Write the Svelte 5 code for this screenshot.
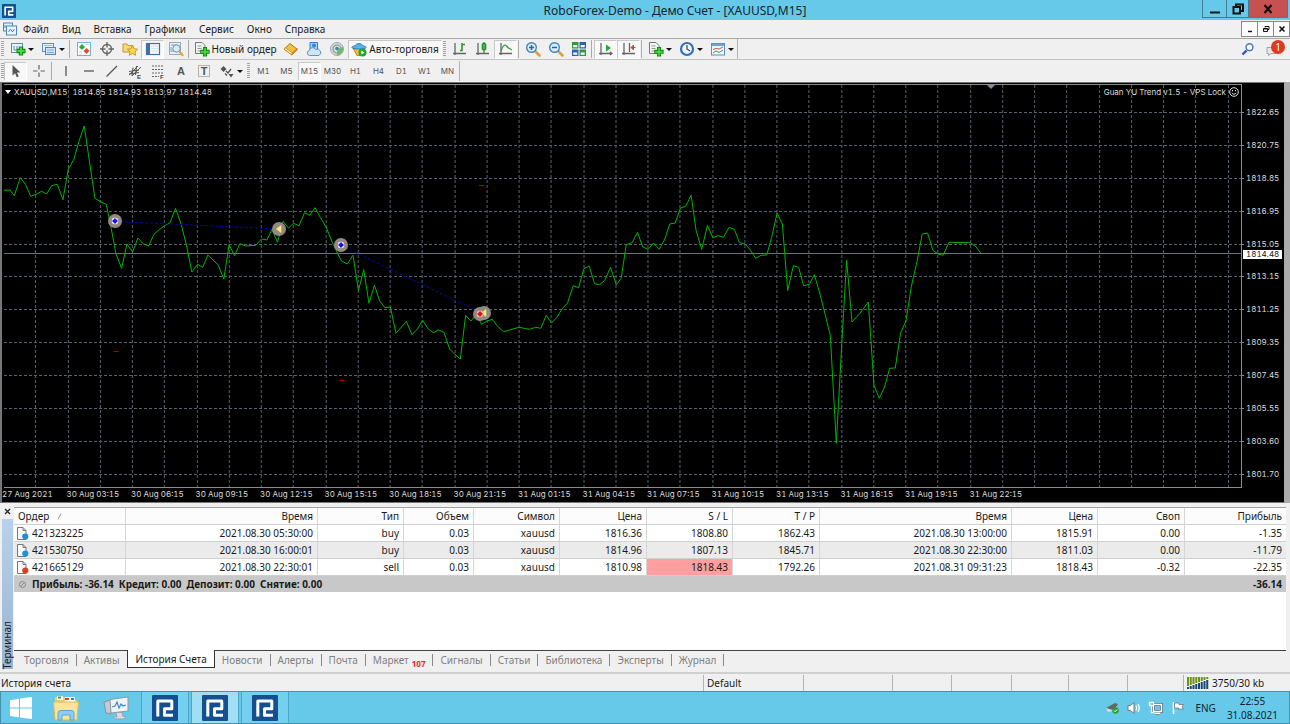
<script>
  const menus = ['Файл', 'Вид', 'Вставка', 'Графики', 'Сервис', 'Окно', 'Справка'];

  const standardBar = [
    { kind: 'drop', icon: 'newchart', label: 'Новый график' },
    { kind: 'drop', icon: 'profiles', label: 'Профили' },
    { kind: 'sep' },
    { kind: 'btn', icon: 'market', label: 'Обзор рынка' },
    { kind: 'btn', icon: 'target', label: 'Окно данных' },
    { kind: 'btn', icon: 'favorites', label: 'Навигатор' },
    { kind: 'btn', icon: 'panel', label: 'Терминал', pressed: true },
    { kind: 'btn', icon: 'tester', label: 'Тестер стратегий' },
    { kind: 'sep' },
    { kind: 'text', icon: 'neworder', label: 'Новый ордер', cls: 'order' },
    { kind: 'btn', icon: 'book', label: 'MetaEditor' },
    { kind: 'btn', icon: 'cloud', label: 'VPS' },
    { kind: 'btn', icon: 'radar', label: 'Сигналы' },
    { kind: 'text', icon: 'auto', label: 'Авто-торговля', cls: 'auto', pressed: true },
    { kind: 'grip' },
    { kind: 'btn', icon: 'bars', label: 'Бары' },
    { kind: 'btn', icon: 'candles', label: 'Свечи' },
    { kind: 'btn', icon: 'line', label: 'Линия', pressed: true },
    { kind: 'sep' },
    { kind: 'btn', icon: 'zoomin', label: 'Увеличить' },
    { kind: 'btn', icon: 'zoomout', label: 'Уменьшить' },
    { kind: 'btn', icon: 'tile', label: 'Мозаика' },
    { kind: 'sep' },
    { kind: 'btn', icon: 'scroll', label: 'Автопрокрутка', pressed: true },
    { kind: 'btn', icon: 'shift', label: 'Сдвиг графика', pressed: true },
    { kind: 'sep' },
    { kind: 'drop', icon: 'indicators', label: 'Индикаторы' },
    { kind: 'drop', icon: 'clock', label: 'Периоды' },
    { kind: 'drop', icon: 'template', label: 'Шаблоны' },
    { kind: 'end' }
  ];

  const drawBar = [
    { kind: 'btn', icon: 'cursor', label: 'Курсор', pressed: true },
    { kind: 'btn', icon: 'cross', label: 'Перекрестие' },
    { kind: 'sep' },
    { kind: 'btn', icon: 'vline', label: 'Вертикальная линия' },
    { kind: 'btn', icon: 'hline', label: 'Горизонтальная линия' },
    { kind: 'btn', icon: 'trend', label: 'Трендовая линия' },
    { kind: 'btn', icon: 'channel', label: 'Канал' },
    { kind: 'btn', icon: 'fibo', label: 'Линии Фибоначчи' },
    { kind: 'btn', icon: 'text', label: 'Текст' },
    { kind: 'btn', icon: 'label', label: 'Текстовая метка' },
    { kind: 'drop', icon: 'arrows', label: 'Стрелки' },
    { kind: 'grip' },
    ...['M1', 'M5', 'M15', 'M30', 'H1', 'H4', 'D1', 'W1', 'MN'].map((t) => ({
      kind: 'tf', label: t, pressed: t === 'M15'
    })),
    { kind: 'end' }
  ];

  // Plot area, in chart units
  const box = { x: 4, y: 85, w: 1238, h: 402 };
  const vlines = Array.from({ length: 38 }, (_, i) => Math.round(35.4 + i * 32.25) + 0.5);
  const prices = [
    ['1822.65', 112], ['1820.75', 145], ['1818.85', 178], ['1816.95', 211],
    ['1815.05', 244], ['1813.15', 276], ['1811.25', 309], ['1809.35', 342],
    ['1807.45', 375], ['1805.55', 408], ['1803.60', 441], ['1801.70', 474]
  ];
  const times = [
    '27 Aug 2021', '30 Aug 03:15', '30 Aug 06:15', '30 Aug 09:15', '30 Aug 12:15', '30 Aug 15:15',
    '30 Aug 18:15', '30 Aug 21:15', '31 Aug 01:15', '31 Aug 04:15', '31 Aug 07:15', '31 Aug 10:15',
    '31 Aug 13:15', '31 Aug 16:15', '31 Aug 19:15', '31 Aug 22:15'
  ];
  const px = (x) => ((x - box.x) / box.w) * 100;
  const py = (y) => ((y - box.y) / box.h) * 100;

  // Close prices, three units to a pixel, each session with its own origin
  const sessions = [
    { x: 0, y: 80, pts: '10,331 30,330 43,347 61,293 77,314 92,349 108,343 125,334 140,342 155,317 172,313 189,359 205,268 222,237 237,184 253,138 268,240 285,355 303,366 319,373 333,440 348,521 365,565 381,492 398,516 414,474 430,491 446,498 462,463 478,449 494,437 510,429 527,385 543,430 560,497 576,576 593,553 609,562 624,525 655,555 672,597 688,494 704,527 720,491 738,498 768,496 785,477 801,480 817,448 833,487 850,424 866,444 881,430 898,437 914,398 930,406 946,383 962,413 979,441 1000,492 1025,543 1043,552 1059,526' },
    { x: 300, y: 180, pts: '160,226 176,332 192,269 208,370 224,316 240,363 256,383 272,381 289,460 320,424 337,464 353,447 369,421 385,446 401,458 417,450 433,457 450,507 466,523 482,537 498,406 514,423 530,402 546,433 562,423 578,418 595,440 612,455 658,442 690,448 708,442 724,445 740,406 756,429 772,412 788,386 804,369 821,317 837,323 853,266 869,258 885,311 900,314 916,301 933,262 950,314 965,295 980,194 998,188 1014,157 1030,201 1046,208 1062,189 1079,208 1095,180 1111,132 1127,129 1143,84 1159,79 1175,46' },
    { x: 680, y: 180, pts: '35,46 50,152 67,208 84,136 100,173 116,167 132,172 149,142 165,148 180,188 197,192 213,210 229,235 245,226 262,225 277,172 293,99 309,132 325,332 342,257 358,262 373,317 390,313 405,284 421,339 437,402 453,467 471,790 487,500 502,241 518,426 542,400 567,366 584,616 600,655 616,621 631,565 648,564 664,459 680,423 696,320 713,245 729,162 745,159 761,211 776,222 792,226 809,187 874,188 890,200 905,220' }
  ];
  const line = sessions
    .flatMap((s) => s.pts.split(' ').map((p) => {
      const [x, y] = p.split(',').map(Number);
      return `${(s.x + x / 3).toFixed(1)},${(s.y + y / 3).toFixed(1)}`;
    }))
    .join(' ');

  const deals = [
    { x: 115, y: 221, type: 'entry' },
    { x: 279, y: 229, type: 'exit' },
    { x: 341, y: 245, type: 'entry' },
    { x: 484, y: 313, type: 'exit' },
    { x: 480, y: 314, type: 'sell' }
  ];
  const stops = [[116, 351], [342, 380], [482, 185]];

  const cols = [
    ['Ордер', 112], ['Время', 192], ['Тип', 86], ['Объем', 70], ['Символ', 86], ['Цена', 87],
    ['S / L', 86], ['T / P', 87], ['Время', 192], ['Цена', 86], ['Своп', 87], ['Прибыль', 101]
  ];
  const total = cols.reduce((a, c) => a + c[1], 0);
  const rows = [
    ['421323225', '2021.08.30 05:30:00', 'buy', '0.03', 'xauusd', '1816.36', '1808.80', '1862.43', '2021.08.30 13:00:00', '1815.91', '0.00', '-1.35'],
    ['421530750', '2021.08.30 16:00:01', 'buy', '0.03', 'xauusd', '1814.96', '1807.13', '1845.71', '2021.08.30 22:30:00', '1811.03', '0.00', '-11.79'],
    ['421665129', '2021.08.30 22:30:01', 'sell', '0.03', 'xauusd', '1810.98', '1818.43', '1792.26', '2021.08.31 09:31:23', '1818.43', '-0.32', '-22.35']
  ];
  const tabs = ['Торговля', 'Активы', 'История Счета', 'Новости', 'Алерты', 'Почта', 'Маркет', 'Сигналы', 'Статьи', 'Библиотека', 'Эксперты', 'Журнал'];
</script>

{#snippet logo(size)}
  <svg width={size} height={size} viewBox="0 0 26 26" aria-hidden="true">
    <rect width="26" height="26" rx="1" fill="#14508f" />
    <path d="M5.800 21.500V6H19.800V13.800H12.500V20.300H21" fill="none" stroke="#fff" stroke-width="3" stroke-linejoin="round" />
  </svg>
{/snippet}

{#snippet icon(name)}
  <svg class="ic" width="16" height="16" viewBox="0 0 16 16" fill="none" aria-hidden="true">
    {#if name === 'newchart'}
      <rect x="1.5" y="2.5" width="11" height="9" fill="#e8f2fb" stroke="#5b8fbd" />
      <path d="M4 5v4M4 9h4M7 5v3" stroke="#5b8fbd" />
      <path d="M11 5.5v9M6.5 10h9" stroke="#168a16" stroke-width="4.4" />
      <path d="M11 6.5v7M7.5 10h7" stroke="#3fdc3a" stroke-width="2" />
    {:else if name === 'profiles'}
      <rect x="1.5" y="2.5" width="11" height="8" fill="#e3effa" stroke="#5b8fbd" />
      <path d="M3 4.5h8" stroke="#9dc2e2" />
      <rect x="4.5" y="6.5" width="10" height="7" fill="#d2e5f6" stroke="#5487b6" />
      <path d="M6 9h7M6 11.5h7" stroke="#86aed2" />
    {:else if name === 'market'}
      <rect x="1.5" y="1.5" width="13" height="13" fill="#fff" stroke="#6fb3e0" />
      <path d="M6 3 9 6 6 9 3 6z" fill="#2fa83a" />
      <path d="M10.500 7 13.500 10 10.500 13 7.500 10z" fill="#e2492b" />
      <path d="M3 11h3M3 13h3M10 3.5h3" stroke="#c5d8e6" />
    {:else if name === 'target'}
      <circle cx="8" cy="8" r="4.5" stroke="#666" stroke-width="1.4" />
      <path d="M8 1v5.5M8 9.5V15M1 8h5.500M9.500 8H15" stroke="#666" stroke-width="1.4" />
    {:else if name === 'favorites'}
      <path d="M1 3h4l1 1.500h5V11H1z" fill="#f6d77a" stroke="#c79a2b" />
      <path d="m10.500 4.500 1.600 3.300 3.500.4-2.600 2.500.7 3.600-3.200-1.800-3.200 1.800.7-3.600-2.600-2.500 3.500-.4z" fill="#ffd84a" stroke="#b98a1c" stroke-width=".8" />
    {:else if name === 'panel'}
      <rect x="1.5" y="2.5" width="13" height="11" fill="#f3f8fd" stroke="#3f6fae" stroke-width="1.2" />
      <path d="M2 3h3v10H2z" fill="#3c6db2" />
      <path d="M6.500 5h7M6.500 7.500h7M6.500 10h7" stroke="#d4e2f1" />
    {:else if name === 'tester'}
      <rect x="1.5" y="1.5" width="11" height="12" fill="#e9eff5" stroke="#9aa9b8" />
      <path d="M3 11V6M5 11V8M3 4h7" stroke="#7fa0c2" />
      <circle cx="8.5" cy="7.5" r="3.7" fill="#d7ecfb" stroke="#7193b4" />
      <path d="m11.200 10.200 4 4.500" stroke="#e0a63b" stroke-width="2.2" />
    {:else if name === 'neworder' || name === 'indicators'}
      <path d="M1.500 1.500H8l3 3v8H1.500z" fill="#f4f4f4" stroke="#777" />
      <path d="M3.500 5h4M3.500 7.500h4M3.500 10h3" stroke="#999" />
      <path d="M11 6v9.500M6.200 10.800h9.500" stroke="#168a16" stroke-width="4" />
      <path d="M11 7v7.500M7.200 10.800h7.500" stroke="#3fdc3a" stroke-width="1.8" />
    {:else if name === 'book'}
      <path d="m1 8 6-5.500 7.500 6L9 14z" fill="#f2c044" stroke="#b27c13" />
      <path d="m1 8 8 6v-2.500L2 6.500z" fill="#fbe7a6" stroke="#b27c13" stroke-width=".6" />
      <path d="m9 14 5.500-5.500V6.800L9 11.600z" fill="#c98f1b" />
    {:else if name === 'cloud'}
      <path d="M4 1.500h7.500v7H4z" fill="#9fd3fa" stroke="#2e7fd0" />
      <circle cx="8" cy="4.5" r="2" fill="#2e86dc" />
      <path d="M3.500 14.500a2.500 2.500 0 0 1-.3-4.900A3.500 3.500 0 0 1 9.800 8.600 3 3 0 0 1 13 14.500z" fill="#cfe4f7" stroke="#5c93c9" />
    {:else if name === 'radar'}
      <circle cx="8" cy="8" r="6.5" fill="#d5dadd" stroke="#a1a8ad" />
      <circle cx="8" cy="8" r="4" stroke="#8c979e" stroke-width="1.2" />
      <path d="M8 8v6.500A6.500 6.500 0 0 0 14 6z" fill="#5cb85c" opacity=".8" />
      <circle cx="8" cy="7.5" r="1.8" fill="#4d7fb0" />
    {:else if name === 'auto'}
      <path d="M2 7h12l-5 7.500H6z" fill="#f1bd3a" stroke="#bd861a" />
      <path d="M1 6.500C1 5 3.500 5 4.500 4.500 5 2 11 2 11.500 4.500 12.500 5 15 5 15 6.500c0 2-14 2-14 0z" fill="#58b4e8" stroke="#2b7fb8" />
      <circle cx="11.5" cy="11.5" r="4" fill="#25a52f" />
      <path d="m10.300 9.400 3.200 2.100-3.200 2.100z" fill="#fff" />
    {:else if name === 'bars'}
      <path d="M3 2v12M1 12.500h13" stroke="#666" stroke-width="1.3" />
      <path d="M10 2v8M8 9.500h2M10 3.500h3" stroke="#1d9a2b" stroke-width="1.5" />
    {:else if name === 'candles'}
      <path d="M3 2v12M1 12.500h13" stroke="#666" stroke-width="1.3" />
      <path d="M9 1v11" stroke="#177a22" />
      <rect x="7.2" y="2.5" width="3.6" height="6.5" rx="1" fill="#30c040" stroke="#177a22" />
    {:else if name === 'line'}
      <path d="M3 2v12M1 12.500h13" stroke="#666" stroke-width="1.3" />
      <path d="M3 10C5 4 7 3 8.500 5S12 8 14 9" stroke="#3b9d45" stroke-width="1.3" />
    {:else if name === 'zoomin' || name === 'zoomout'}
      <path d="m9.500 9.500 5 5" stroke="#dba33c" stroke-width="2.6" stroke-linecap="round" />
      <circle cx="6.5" cy="6.5" r="4.8" fill="#d9eefc" stroke="#3f83c4" stroke-width="1.4" />
      <path d="M4 6.500h5" stroke="#2a62a8" stroke-width="1.5" />
      {#if name === 'zoomin'}<path d="M6.500 4v5" stroke="#2a62a8" stroke-width="1.5" />{/if}
    {:else if name === 'tile'}
      <path d="M1 1h6.500v6.500H1zM8.500 8.500H15V15H8.500z" fill="#2f9a3a" />
      <path d="M8.500 1H15v6.500H8.500zM1 8.500h6.500V15H1z" fill="#3061b8" />
      <path d="M2.200 4h4v2.200h-4zM9.700 4h4v2.200h-4zM2.200 11.500h4v2.200h-4zM9.700 11.500h4v2.200h-4z" fill="#fff" />
    {:else if name === 'scroll'}
      <path d="M3 2v12M1 12.500h13M12 11l2 1.500-2 1.500" stroke="#666" stroke-width="1.3" />
      <path d="m8 3.500 5 3.500L8 10.500z" fill="#27a836" />
    {:else if name === 'shift'}
      <path d="M3 2v12M1 12.500h13M8.500 2v9" stroke="#666" stroke-width="1.3" />
      <path d="M14.500 6.500h-4M12.500 4 10 6.500 12.500 9z" stroke="#cf4a22" fill="#cf4a22" />
    {:else if name === 'clock'}
      <circle cx="8" cy="8" r="6" fill="#eef6fd" stroke="#2f6fc0" stroke-width="2.2" />
      <path d="M8 4v4l3 2" stroke="#444" stroke-width="1.2" />
    {:else if name === 'template'}
      <rect x="1.5" y="2.5" width="13" height="11.5" fill="#edf5fc" stroke="#5c8fbf" />
      <path d="M2 4h12" stroke="#6fa5d6" stroke-width="2" />
      <path d="m3 8.500 3-1 3 .5 4-2" stroke="#c45e3d" />
      <path d="m3 12 3-2 3 1.500 4-2.500" stroke="#4f9a4b" />
    {:else if name === 'cursor'}
      <path d="M4.500 2v10.500l2.600-2.300 1.700 4 1.900-.8-1.700-3.900H12.500z" fill="#555" />
    {:else if name === 'cross'}
      <path d="M8 2v4.500M8 9.500V14M2 8h4.500M9.500 8H14" stroke="#666" stroke-width="1.2" />
    {:else if name === 'vline'}
      <path d="M8 3v10" stroke="#555" stroke-width="1.3" />
    {:else if name === 'hline'}
      <path d="M3 8h10" stroke="#555" stroke-width="1.3" />
    {:else if name === 'trend'}
      <path d="M2.500 13.500 13 3" stroke="#555" stroke-width="1.3" />
    {:else if name === 'channel'}
      <path d="m2 12 9-9M5 13l9-9M2 8.500 12 7M2 11l10-1.500M6 4.500 5 13M9.500 3 8.500 12" stroke="#555" />
      <text x="10" y="15.500" class="tiny">E</text>
    {:else if name === 'fibo'}
      <path d="M2 3h12M2 6.500h12M2 10h12M2 13.500h7" stroke="#666" stroke-dasharray="2 1" />
      <text x="10" y="15.500" class="tiny">F</text>
    {:else if name === 'text'}
      <text x="8" y="12" class="glyph">A</text>
    {:else if name === 'label'}
      <rect x="2.5" y="2.5" width="11" height="11" stroke="#777" stroke-dasharray="1 1" />
      <text x="8" y="12" class="glyph">T</text>
    {:else if name === 'arrows'}
      <path d="m4.500 3 3 3-3 3-3-3zM9.500 11h5L12 14.500z" fill="#555" />
      <path d="m7 8 2 2 3-4M6 10.500 8 12.500" stroke="#555" stroke-width="1.3" />
    {/if}
  </svg>
{/snippet}

{#snippet bar(items)}
  {#each items as it}
    {#if it.kind === 'sep'}
      <span class="sep"></span>
    {:else if it.kind === 'grip'}
      <span class="grip"></span>
    {:else if it.kind === 'end'}
      <span class="end"></span>
    {:else if it.kind === 'tf'}
      <button class="tb tf" class:pressed={it.pressed}>{it.label}</button>
    {:else if it.kind === 'text'}
      <button class="tb wide {it.cls}" class:pressed={it.pressed}>{@render icon(it.icon)}<span>{it.label}</span></button>
    {:else if it.kind === 'drop'}
      <button class="tb drop" aria-label={it.label}>{@render icon(it.icon)}<i class="caret"></i></button>
    {:else}
      <button class="tb" class:pressed={it.pressed} aria-label={it.label}>{@render icon(it.icon)}</button>
    {/if}
  {/each}
{/snippet}

<div class="app">
  <header class="title">
    <span class="applogo">{@render logo(14)}</span>
    <h1>RoboForex-Demo - Демо Счет - [XAUUSD,M15]</h1>
    <div class="winbtns">
      <button aria-label="Свернуть"><svg width="12" height="12" viewBox="0 0 12 12"><path d="M1 9.500h10" stroke="#111" stroke-width="2" /></svg></button>
      <button class="max" aria-label="Развернуть"><svg width="12" height="12" viewBox="0 0 12 12" fill="none" stroke="#111" stroke-width="2"><path d="M4 3V1.500h7V8H9" /><path d="M1.500 4H8v6.500H1.500z" /></svg></button>
      <button class="close" aria-label="Закрыть"><svg width="10" height="10" viewBox="0 0 10 10"><path d="m1.500 1 7 8M8.500 1l-7 8" stroke="#111" stroke-width="2.2" /></svg></button>
    </div>
  </header>

  <nav class="menu">
    <svg class="doc" width="16" height="14" viewBox="0 0 16 14" fill="none" aria-hidden="true">
      <rect x="1.5" y="1" width="9" height="8" fill="#dcecf9" stroke="#4c86bd" />
      <rect x="4.5" y="4" width="10" height="9" fill="#eaf4fc" stroke="#4c86bd" />
      <path d="M3 3v3M6.500 10l2-3 2 3 2-3" stroke="#4c86bd" />
    </svg>
    {#each menus as m}<button>{m}</button>{/each}
    <div class="mdi">
      <button aria-label="Свернуть окно"><svg width="8" height="8" viewBox="0 0 8 8"><path d="M2 6.500h4" stroke="#111" stroke-width="1.4" /></svg></button>
      <button aria-label="Восстановить окно"><svg width="8" height="8" viewBox="0 0 8 8" fill="none" stroke="#111"><path d="M3 2.500V1.500h4V4.500H6M1.500 3.500h4v3h-4zM1.500 4h4" /></svg></button>
      <button aria-label="Закрыть окно"><svg width="8" height="8" viewBox="0 0 8 8"><path d="m1.500 1.500 5 5M6.500 1.500l-5 5" stroke="#111" stroke-width="1.6" /></svg></button>
    </div>
  </nav>

  <div class="tools">
    <div class="toolbar first"><span class="grip"></span>{@render bar(standardBar)}
      <div class="right">
        <button aria-label="Поиск"><svg width="14" height="14" viewBox="0 0 14 14" fill="none"><path d="m1.500 12.500 4-4" stroke="#2c55b5" stroke-width="2.4" /><circle cx="8.5" cy="5.2" r="3.4" fill="#fff" stroke="#4e74c4" stroke-width="1.5" /></svg></button>
        <button class="chat" aria-label="Сообщения">
          <svg width="14" height="14" viewBox="0 0 14 14"><path d="M2 5.500h9v6H6L3.500 13.500V11.500H2z" fill="#e8e8ea" stroke="#a4a4aa" /></svg>
          <span class="badge">1</span>
        </button>
      </div>
    </div>
    <div class="toolbar second"><span class="grip thin"></span>{@render bar(drawBar)}</div>
  </div>

  <main class="chart">
    <div class="plot">
      <svg class="lines" viewBox="{box.x} {box.y} {box.w} {box.h}" preserveAspectRatio="none" fill="none">
        <g class="grid">
          {#each vlines as x}<path d="M{x} 85V487" />{/each}
          {#each prices as p}<path d="M4 {p[1] + 0.5}H1242" />{/each}
        </g>
        <path class="bid" d="M4 253.500H1242" />
        <polyline class="close-line" points={line} />
        <path class="deal-line" d="M115 221.500 279 229M341 245.500 482 313" />
        {#each stops as s}<path class="stop" d="M{s[0] - 2.5} {s[1] + 0.5}h5" />{/each}
      </svg>
      {#each deals as d}
        <i class="halo" style="left:{px(d.x)}%;top:{py(d.y)}%"></i>
      {/each}
      {#each deals as d}
        <svg class="deal" style="left:{px(d.x)}%;top:{py(d.y)}%" width="14" height="14" viewBox="0 0 14 14">
          {#if d.type === 'exit'}
            <path d="M9 3.500v7L4.500 7z" fill="#fff04a" stroke="#e8e4dc" stroke-width=".6" />
          {:else}
            <circle cx="7" cy="7" r="3.2" fill={d.type === 'sell' ? '#e8d8c8' : '#fff'} />
            <path d="M7 4 10 7 7 10 4 7z" fill={d.type === 'sell' ? '#f01010' : '#1414f0'} />
          {/if}
        </svg>
      {/each}
      <div class="quote"><i></i><span>XAUUSD,M15</span><span>1814.85 1814.93 1813.97 1814.48</span></div>
      <div class="expert">Guan YU Trend v1.5 - VPS Lock
        <svg width="10" height="10" viewBox="0 0 10 10" fill="none" stroke="#ddd" aria-hidden="true"><circle cx="5" cy="5" r="4.3" /><path d="M2.800 5.800c.8 1.900 3.600 1.900 4.400 0M3.500 3v1.300M6.500 3v1.300" /></svg>
      </div>
      <i class="shiftmark" style="left:{px(992)}%"></i>
    </div>
    <div class="yaxis">
      {#each prices as p}<span style="top:{py(p[1])}%">{p[0]}</span>{/each}
      <span class="now" style="top:{py(253.5)}%">1814.48</span>
    </div>
    <div class="xaxis">
      {#each times as t, i}<span style="left:{px(4 + i * 64.5)}%">{t}</span>{/each}
    </div>
  </main>

  <section class="terminal">
    <div class="side">
      <button aria-label="Закрыть терминал"><svg width="7" height="7" viewBox="0 0 7 7"><path d="m1 1 5 5M6 1 1 6" stroke="#222" stroke-width="1.3" /></svg></button>
      <div class="strip"><span>Терминал</span></div>
    </div>
    <div class="body">
      <div class="list">
        <table>
          <colgroup>{#each cols as c}<col style="width:{(c[1] / total) * 100}%" />{/each}</colgroup>
          <thead><tr>{#each cols as c, i}<th>{c[0]}{#if i === 0}<svg width="6" height="7" viewBox="0 0 6 7"><path d="M1 6.500 4 .5" stroke="#999" /></svg>{/if}</th>{/each}</tr></thead>
          <tbody>
            {#each rows as r}
              <tr>
                {#each r as c, i}
                  <td class:hit={c === '1818.43' && i === 6}>
                    {#if i === 0}
                      <svg width="13" height="13" viewBox="0 0 13 13"><path d="M1.500.5H7l3 3v9H1.500z" fill="#fafafa" stroke="#777" /><path d="M7 .5v3h3" fill="none" stroke="#777" /><circle cx="9.3" cy="9.5" r="3.1" fill={r[2] === 'sell' ? '#d9401c' : '#1e8fd8'} /></svg>
                    {/if}{c}
                  </td>
                {/each}
              </tr>
            {/each}
          </tbody>
          <tfoot>
            <tr>
              <td colspan="11"><svg width="13" height="9" viewBox="0 0 13 9"><circle cx="6.5" cy="4.5" r="3" fill="none" stroke="#888" /><path d="m4.500 6.500 4-4" stroke="#888" /></svg><b>Прибыль: -36.14</b><b>Кредит: 0.00</b><b>Депозит: 0.00</b><b>Снятие: 0.00</b></td>
              <td><b>-36.14</b></td>
            </tr>
          </tfoot>
        </table>
      </div>
      <div class="tabs" role="tablist">
        {#each tabs as t, i}
          <button role="tab" aria-selected={i === 2} class:active={i === 2} class:nosep={i === 1}>{t}{#if t === 'Маркет'}<sub>107</sub>{/if}</button>
        {/each}
      </div>
    </div>
  </section>

  <footer class="status">
    <span>История счета</span><span>Default</span><span></span><span></span><span></span><span></span><span></span><span></span>
    <span class="net">
      <svg width="22" height="12" viewBox="0 0 22 12" aria-hidden="true">
        {#each [0, 1, 2, 3, 4, 5, 6, 7] as i}
          <rect x={i * 2.75} y="0" width="2" height={9 - i} fill="#6f8f1c" />
          <rect x={i * 2.75} y={10 - i} width="2" height={2 + i} fill="#164a72" />
        {/each}
      </svg>3750/30 kb</span>
  </footer>

  <div class="taskbar">
    <button class="pin" aria-label="Пуск"><svg width="24" height="24" viewBox="0 0 24 24" fill="#fff"><path d="M1 4.200 10 2.800V11.500H1zM11 2.600 23 1V11.500H11zM1 12.500h9v8.700L1 19.900zM11 12.500h12V23L11 21.400z" /></svg></button>
    <button class="pin" aria-label="Проводник"><svg width="28" height="26" viewBox="0 0 28 26"><path d="M3 2h9l2 3h11v19H3z" fill="#f0cf6a" /><path d="M5 1h6v4H5zM13 2h10v5H13z" fill="#fff" /><path d="M6 1.500h3v2H6z" fill="#3aa14a" /><path d="M13 3h4v2h-4z" fill="#d5412d" /><path d="M19 3h3v2h-3z" fill="#2f7fd0" /><path d="M1.500 7h25L25 25H3z" fill="#f9e59a" stroke="#dcb94f" /><path d="M6 25v-7q0-2.500 3-2.500h10q3 0 3 2.500v7h-4v-5h-8v5z" fill="#8fcdf0" stroke="#5aa6d8" /></svg></button>
    <button class="pin" aria-label="Диспетчер задач"><svg width="26" height="24" viewBox="0 0 26 24"><path d="M1 6 8 4v14l-5-1z" fill="#c5ccd1" stroke="#87929a" /><path d="M7 3.500 25 1v14L8 17z" fill="#eef3f6" stroke="#8e9aa2" /><path d="m9 11 3-1 2-4 2 6 2-4 2 2 3-1" fill="none" stroke="#3b8cc9" stroke-width="1.2" /><path d="M13 16.500h6l1 4h3l-2 2.500h-9l-2-2h4z" fill="#d6dce0" stroke="#98a3aa" /></svg></button>
    {#each [0, 1, 2] as i}<button class="task" class:current={i === 1} aria-label="Терминал {i + 1}">{@render logo(26)}</button>{/each}
    <div class="tray">
      <svg width="16" height="16" viewBox="0 0 16 16"><path d="M2 8 11 3l3 1-4 6z" fill="#666" /><path d="m2 8 7 3-5 1z" fill="#ddd" /><circle cx="11.5" cy="10.5" r="3.2" fill="#2f9e2f" /><path d="m10 10.500 1.200 1.200 2-2.200" fill="none" stroke="#fff" /></svg>
      <svg width="16" height="16" viewBox="0 0 16 16" fill="none"><path d="M2 5.500h2.500L8 2.500v11L4.500 10.500H2z" fill="#fff" stroke="#777" /><path d="M10 5.500q1.500 2.500 0 5M12 4q2.500 4 0 8" stroke="#fff" stroke-width="1.2" /></svg>
      <svg width="16" height="16" viewBox="0 0 16 16" fill="none"><path d="M5.500 4.500h8v7h-8zM7 13.500h5" stroke="#5c6b73" stroke-width="2.8" /><path d="M5.500 4.500h8v7h-8zM7 13.500h5" stroke="#fff" stroke-width="1.3" /><path d="M1.500 2.500h4v3h-4zM3.500 5.500v7h3" stroke="#fff" stroke-width="1.3" /></svg>
      <svg width="16" height="16" viewBox="0 0 16 16"><path d="M3.500 2v12" stroke="#fff" stroke-width="1.6" /><path d="M4.500 3H9v1.500h4.500L12 7l1.500 2H8.500V8h-4z" fill="#fff" stroke="#666" stroke-width=".7" /></svg>
      <span class="lang">ENG</span>
      <div class="clock"><span>22:55</span><span>31.08.2021</span></div>
    </div>
  </div>
</div>

<style>
  :global(body) { margin: 0; }
  .app { min-height: 100vh; display: flex; flex-direction: column; background: #f0f0f0; color: #1a1a1a; font: 10px/16px "Noto Sans", "Open Sans", sans-serif; }
  button { all: unset; box-sizing: border-box; display: flex; align-items: center; justify-content: center; white-space: nowrap; cursor: default; }
  svg { display: block; flex: none; }
  .tiny { font: 700 6px "Liberation Sans", sans-serif; fill: #444; }
  .glyph { font: 700 11px "Liberation Sans", sans-serif; fill: #555; text-anchor: middle; }

  .title { display: grid; grid-template-columns: 88px 1fr 88px; height: 20px; background: #66c9ea; padding-left: 2px; }
  .applogo { align-self: center; }
  h1 { margin: 0; font-size: 12px; line-height: 21px; font-weight: 400; text-align: center; padding-left: 58px; color: #13242c; }
  .winbtns { display: flex; height: 18px; margin-right: 2px; border: 1px solid #3f7f96; border-top: 0; box-sizing: border-box; }
  .winbtns button { flex: 24; border-right: 1px solid #3f7f96; }
  .winbtns .max { flex: 21; }
  .winbtns .close { flex: 39; background: #c75050; border: 0; }

  .menu { display: flex; align-items: center; gap: 13px; height: 18px; padding-left: 2px; border-bottom: 1px solid #a8a8a8; }
  .doc { margin-right: -8px; }
  .mdi { display: flex; margin-left: auto; border: 1px solid #888; height: 16px; box-sizing: border-box; background: #fbfbfb; }
  .mdi button { width: 16px; border-right: 1px solid #888; }
  .mdi button:last-child { border: 0; width: 15px; }

  .toolbar { display: flex; align-items: center; height: 20px; padding: 0 5px 0 0; }
  .toolbar.second { height: 22px; border-top: 1px solid #c4c4c4; }
  .tb { width: 23px; height: 19px; flex: none; }
  .tb.drop { width: 31px; gap: 2px; }
  .tb.wide { gap: 2px; }
  .order { width: 88px; }
  .auto { width: 94px; }
  .pressed { background: #f8f8f8; border: 1px solid #c8c8c8; border-right-color: #fff; border-bottom-color: #fff; }
  .caret { border: 3px solid transparent; border-top: 3px solid #111; border-bottom: 0; }
  .tf { font: 8px/12px Inter, "DejaVu Sans", sans-serif; font-variant-numeric: tabular-nums; color: #555; }
  .sep { width: 2px; height: 18px; margin-right: 2px; border-right: 1px solid #aaa; box-sizing: border-box; flex: none; }
  .end { width: 1px; height: 20px; background: #b4b4b4; }
  .grip { width: 3px; height: 16px; margin-right: 2px; margin-left: 1px; flex: none; background: repeating-linear-gradient(#a4a4a4 0 1px, transparent 1px 2px); }
  .grip.thin { margin-right: 0; }
  .right { display: flex; gap: 10px; margin-left: auto; }
  .chat { position: relative; width: 20px; justify-content: start; }
  .badge { position: absolute; right: 0; top: -2px; width: 14px; height: 14px; border-radius: 50%; background: #e03a1e; color: #fff; font-size: 10px; line-height: 14px; text-align: center; }

  .chart { flex: 1 0 420px; display: grid; grid-template-columns: 1fr 42px; grid-template-rows: 1fr 14px; box-sizing: border-box; background: #000; border: 1px solid #777; border-left-width: 2px; border-right-color: #aaa; margin-right: 5px; padding: 1px 0 0 2px; box-shadow: 5px 0 #ababab; color: #dcdcdc; font: 8px/12px Inter, "DejaVu Sans", sans-serif; font-variant-numeric: tabular-nums; }
  .plot { position: relative; border: 1px solid #8c8c8c; border-left: 0; }
  .lines { position: absolute; inset: 0; width: 100%; height: 100%; }
  .lines :is(path, polyline) { vector-effect: non-scaling-stroke; }
  .grid { stroke: #56636f; stroke-dasharray: 3 2; }
  .bid { stroke: #66737f; }
  .close-line { stroke: #00b400; }
  .deal-line { stroke: #0000b8; stroke-dasharray: 3 2; }
  .stop { stroke: #b00000; }
  .deal, .halo { position: absolute; margin: -7px 0 0 -7px; }
  .halo { width: 14px; height: 14px; border-radius: 50%; background: #948880; }
  .quote { position: absolute; left: 1px; top: 1px; display: flex; gap: 5px; align-items: center; }
  .quote i { border: 3px solid transparent; border-top: 4px solid #fff; border-bottom: 0; margin-right: -2px; }
  .expert { position: absolute; right: 2px; top: 1px; display: flex; align-items: center; gap: 3px; }
  .shiftmark { position: absolute; top: 0; margin-left: -4px; border: 4px solid transparent; border-top: 4px solid #7c8fa3; border-bottom: 0; }
  .yaxis { position: relative; margin: 1px 0; }
  .yaxis span { position: absolute; left: 4px; margin-top: -6px; }
  .yaxis span::before { content: ""; position: absolute; left: -4px; top: 6px; width: 2px; height: 1px; background: #8c8c8c; }
  .yaxis .now { left: 1px; margin-top: -4px; padding: 0 3px; line-height: 9px; background: #fff; color: #111; }
  .yaxis .now::before { display: none; }
  .xaxis { position: relative; }
  .xaxis span { position: absolute; top: 0; margin-left: -2px; white-space: nowrap; }

  .terminal { display: grid; grid-template-columns: 14px 1fr; height: 168px; margin-top: 1px; margin-right: 4px; }
  .side { display: flex; flex-direction: column; padding: 0 1px 3px 2px; }
  .side button { height: 15px; }
  .strip { flex: 1; display: flex; align-items: flex-end; justify-content: center; background: linear-gradient(#b9d1ea, #98b4d2); }
  .strip span { writing-mode: vertical-rl; transform: rotate(180deg); line-height: 11px; }
  .body { display: flex; flex-direction: column; min-width: 0; padding-top: 3px; }
  .list { flex: 1; background: #fff; border-top: 1px solid #a0a0a0; border-bottom: 1px solid #444; }
  table { width: 100%; border-collapse: separate; border-spacing: 0; table-layout: fixed; line-height: 15px; }
  th, td { box-sizing: border-box; padding: 0 4px; height: 17px; text-align: right; font-weight: 400; white-space: nowrap; border-right: 1px solid #d6d6d6; border-bottom: 1px solid #d0d0d0; }
  th { background: #fcfcfc; }
  th:first-child, td:first-child { text-align: left; }
  th:first-child svg { display: inline-block; margin-left: 8px; }
  td svg { display: inline-block; vertical-align: middle; margin: 0 3px 0 -2px; }
  th:last-child, td:last-child { border-right: 0; }
  tbody tr:nth-child(2) { background: #ebebeb; }
  .hit { background: #ff9f9f; }
  tfoot td { background: #c8c8c8; border: 0; height: 16px; }
  b + b { margin-left: 5px; }
  .tabs { display: flex; padding-left: 3px; height: 21px; }
  .tabs button { padding: 0 8px 0 7px; height: 17px; color: #808080; position: relative; }
  .tabs button:not(.active, .nosep)::after { content: ""; position: absolute; right: 0; top: 3px; height: 12px; width: 1px; background: #888; }
  .tabs .active { background: #fff; color: #1a1a1a; border: 1px solid #333; border-top: 0; margin-top: -1px; height: 18px; padding: 0 7px; }
  sub { font-size: 8px; line-height: 8px; font-weight: 700; color: #e8242c; align-self: flex-end; margin-left: 3px; }

  .status { display: grid; grid-template-columns: 703fr 100fr 89fr 59fr 60fr 57fr 59fr 56fr 107fr; height: 19px; border-top: 2px solid #d0d0d0; box-sizing: border-box; line-height: 16px; }
  .status span { padding-left: 3px; border-left: 1px solid #b4b4b4; margin-top: 1px; }
  .status span:first-child { padding-left: 0; border-color: transparent; }
  .status .net { display: flex; align-items: center; gap: 3px; }

  .taskbar { display: flex; height: 33px; box-sizing: border-box; border: 1px solid #4790ad; background: #66c9ea; }
  .pin { width: 40px; }
  .pin + .pin { width: 50px; }
  .task { width: 48px; margin-right: 2px; border: solid #4ba6c6; border-width: 0 1px; background: #74d0ee; }
  .task.current { background: #a0def3; }
  .tray { display: flex; align-items: center; gap: 6px; margin-left: auto; padding-right: 11px; color: #12262f; }
  .lang { margin: 0 5px 0 3px; }
  .clock { display: flex; flex-direction: column; align-items: center; line-height: 14px; }
</style>
